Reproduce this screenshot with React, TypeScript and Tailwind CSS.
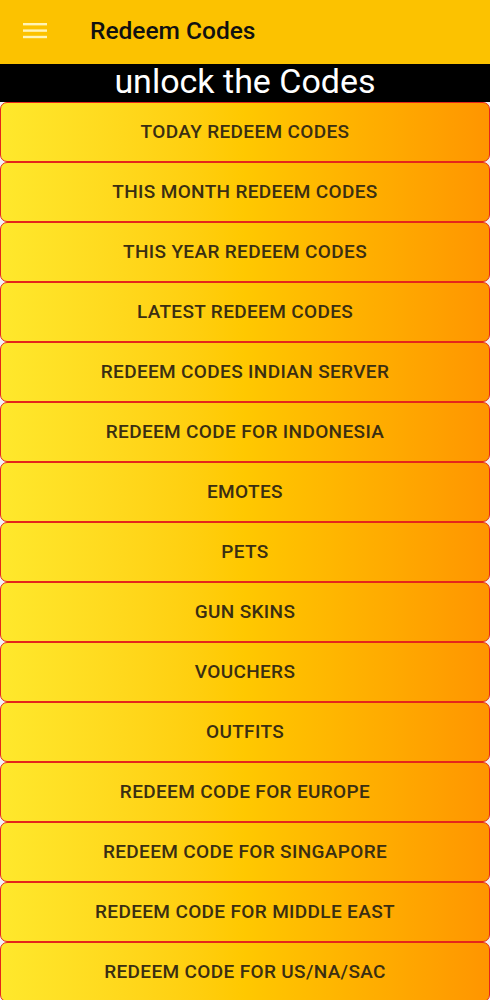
const ITEMS = [
  'TODAY REDEEM CODES',
  'THIS MONTH REDEEM CODES',
  'THIS YEAR REDEEM CODES',
  'LATEST REDEEM CODES',
  'REDEEM CODES INDIAN SERVER',
  'REDEEM CODE FOR INDONESIA',
  'EMOTES',
  'PETS',
  'GUN SKINS',
  'VOUCHERS',
  'OUTFITS',
  'REDEEM CODE FOR EUROPE',
  'REDEEM CODE FOR SINGAPORE',
  'REDEEM CODE FOR MIDDLE EAST',
  'REDEEM CODE FOR US/NA/SAC',
];

export default function App() {
  return (
    <div className="w-[490px] min-h-[1000px] bg-[#f4f4f4] font-['Roboto',sans-serif]">
      {/* Toolbar */}
      <header className="h-[64px] bg-[#fcc200] flex items-center">
        <button className="w-[70px] h-full flex items-center pl-[23px]">
          <svg width="24" height="16" viewBox="0 0 24 16" className="mt-[-3px]">
            <rect x="0" y="0" width="24" height="2.4" fill="#fff4b8" />
            <rect x="0" y="6.4" width="24" height="2.4" fill="#fff4b8" />
            <rect x="0" y="12.8" width="24" height="2.4" fill="#fff4b8" />
          </svg>
        </button>
        <h1 className="ml-[20px] text-[24.5px] font-medium text-[#111] -mt-[1px]">Redeem Codes</h1>
      </header>

      {/* Banner */}
      <div className="h-[38px] bg-black flex items-start justify-center">
        <span className="text-white text-[34px] leading-[34px]">unlock the Codes</span>
      </div>

      {/* Buttons */}
      <div className="flex flex-col">
        {ITEMS.map(item => (
          <button
            key={item}
            className="h-[60px] w-full rounded-[7px] border border-[#e5261a] bg-gradient-to-r from-[#ffe82c] via-[#ffc800] to-[#ff9500] flex items-center justify-center"
          >
            <span className="text-[19px] font-medium text-[#3a2e12] tracking-[0.35px] mt-[1px]">{item}</span>
          </button>
        ))}
      </div>
    </div>
  );
}
